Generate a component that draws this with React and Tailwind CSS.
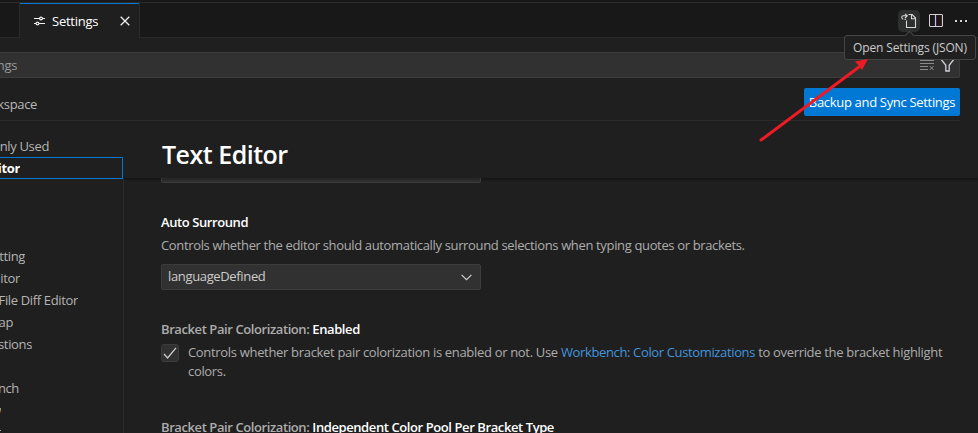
import React from "react";

const toc = [
  { text: "nly Used", box: "w-[49px]" },
  { text: "itor", box: "w-[20px]", active: true },
  { text: "", box: "w-0" },
  { text: "", box: "w-0" },
  { text: "", box: "w-0" },
  { text: "tting", box: "w-[25px]" },
  { text: "itor", box: "w-[20px]" },
  { text: "File Diff Editor", box: "w-[78px]" },
  { text: "ap", box: "w-[13px]" },
  { text: "stions", box: "w-[32px]" },
  { text: "", box: "w-0" },
  { text: "nch", box: "w-[19px]" },
  { text: "w", box: "w-[1px]" },
  { text: "r", box: "w-[1px]" },
];

function TabBar() {
  return (
    <div className="flex h-[35px] shrink-0">
      <div className="w-[20px] border-r border-b border-[#2b2b2b] bg-[#181818]" />
      <div className="flex w-[119px] items-center border-t border-[#0078d4] pl-[14px] text-white">
        <svg width="11" height="11" viewBox="0 0 11 11" fill="none" stroke="#f0f0f0" strokeWidth="1.2">
          <path d="M0 2.500h5.500M8.500 2.500H11M0 7.500h2M5 7.500h6" />
          <circle cx="7" cy="2.500" r="1.400" />
          <circle cx="3.500" cy="7.500" r="1.400" />
        </svg>
        <span className="ml-[7px] w-[58px] whitespace-nowrap tracking-[-0.25px]">Settings</span>
        <svg className="ml-[10px]" width="10" height="10" viewBox="0 0 10 10" stroke="#f0f0f0" strokeWidth="1.3">
          <path d="M.7.7l8.6 8.6M9.3.7L.7 9.3" />
        </svg>
      </div>
      <div className="flex flex-1 items-center justify-end border-b border-l border-[#2b2b2b] bg-[#181818] pr-[9px] pt-[1px]">
        <div className="flex h-[22px] w-[22px] items-center justify-center rounded-[5px] bg-[#2d2f2f]">
          <svg width="16" height="16" viewBox="0 0 16 16" fill="none" stroke="#d8d8d8" strokeWidth="1.1">
            <path d="M5.500 7.500v7h9V5l-3.300-3.500H7.500M10.500 1.800v4h4" />
            <path d="M2.300 6.300C.2 5.700.2 2.800 2.500 2.800H6M4 .8l2.200 2L4 5M3.600 6.400h1.200" />
          </svg>
        </div>
        <svg className="ml-[9px]" width="14" height="14" viewBox="0 0 14 14" fill="none" stroke="#d2d2d2" strokeWidth="1">
          <rect x=".5" y=".5" width="13" height="12" rx=".5" />
          <path d="M6.500 1v11" stroke="#c9c0d6" />
          <path d="M7.500 1v11M12.500 1v11" stroke="#4a2024" />
          <path d="M5.500 1v11" stroke="#20204c" />
        </svg>
        <svg className="ml-[11px] mr-[1px]" width="14" height="4" viewBox="0 0 14 4" fill="#d4d4d4">
          <rect x="1" y="1" width="2" height="2" />
          <rect x="6" y="1" width="2" height="2" />
          <rect x="11" y="1" width="2" height="2" />
        </svg>
      </div>
    </div>
  );
}

function Header() {
  return (
    <div className="mr-[18px] flex h-[83px] shrink-0 flex-col border-b border-[#2b2b2b]">
      <div className="mt-[14px] flex h-[26px] shrink-0 items-center rounded-r-[2px] border border-l-0 border-[#3c3c3c] bg-[#313131]">
        <span className="flex w-[17px] justify-end overflow-hidden text-[#989898]">ngs</span>
        <svg className="ml-auto" width="15" height="12" viewBox="0 0 15 12" fill="none" stroke="#8b8b8b" strokeWidth="1">
          <path d="M0 1.500h14M0 4.500h14M0 7.500h8M0 10.500h8M9.800 7l3.800 4M13.600 7l-3.800 4" />
        </svg>
        <svg className="ml-[5px] mr-[4px]" width="15" height="14" viewBox="0 0 15 14" fill="none" stroke="#d0d0d6" strokeWidth="1.3">
          <path d="M1 1.200h13L9.200 7.300V13H5.800V7.300z" />
        </svg>
      </div>
      <div className="mt-[10px] flex h-[28px] items-center justify-between">
        <span className="flex w-[37px] justify-end overflow-hidden pt-[3px] text-[#b8b8b8]">kspace</span>
        <button className="h-[28px] w-[156px] whitespace-nowrap rounded-[2px] bg-[#0078d4] text-center text-white tracking-[-0.32px]">
          Backup and Sync Settings
        </button>
      </div>
    </div>
  );
}

function Toc() {
  return (
    <nav className="w-[123px] shrink-0 overflow-hidden pt-[14px]">
      {toc.map((row, i) => (
        <div
          key={i}
          className={
            row.active
              ? "flex h-[22px] items-center border border-l-0 border-[#0078d4] font-bold text-white"
              : "flex h-[22px] items-center text-[#b4b4b4]"
          }
        >
          <span className={"flex justify-end overflow-hidden whitespace-nowrap " + row.box}>{row.text}</span>
        </div>
      ))}
    </nav>
  );
}

function Title({ prefix, name }) {
  return (
    <div className="h-[18px] whitespace-nowrap leading-[18px] font-semibold text-white tracking-[-0.41px]">
      {prefix && <span className="text-[#adadad]">{prefix} </span>}
      {name}
    </div>
  );
}

function Content() {
  return (
    <main className="min-w-0 flex-1">
      <h1 className="h-[57px] pl-[39px] pt-[14px] text-[25px] leading-[38px] font-semibold text-white tracking-[-0.5px]">
        Text Editor
      </h1>
      <div className="h-[255px] overflow-hidden border-l border-[#2b2b2b] pl-[37px]">
        <div className="-ml-[37px] h-[4px] bg-linear-to-b from-[#141414] to-[#1f1f1f] pl-[37px]">
          <div className="h-[5px] w-[320px] rounded-b-[2px] border border-t-0 border-[#3c3c3c] bg-linear-to-b from-[#252525] to-[#313131]" />
        </div>
        <div className="mt-[31px]">
          <Title name="Auto Surround" />
        </div>
        <p className="mt-[5px] h-[18px] whitespace-nowrap leading-[18px] text-[#adadad]">
          Controls whether the editor should automatically surround selections when typing quotes or brackets.
        </p>
        <div className="mt-[10px] flex h-[26px] w-[320px] items-center justify-between rounded-[2px] border border-[#3c3c3c] bg-[#313131] pl-[6px] pr-[8px] text-[#cccccc]">
          <span className="-mt-[2px]">languageDefined</span>
          <svg width="11" height="7" viewBox="0 0 11 7" fill="none" stroke="#d0d0d0" strokeWidth="1.2">
            <path d="M.6.8l4.900 4.900L10.400.8" />
          </svg>
        </div>
        <div className="mt-[30px]">
          <Title prefix="Bracket Pair Colorization:" name="Enabled" />
        </div>
        <div className="mt-[6px] flex">
          <div className="flex h-[18px] w-[18px] shrink-0 items-center justify-center rounded-[3px] border border-[#3c3c3c] bg-[#313131]">
            <svg width="14" height="12" viewBox="0 0 14 12" fill="none" stroke="#cccccc" strokeWidth="1.3">
              <path d="M1 7l3.600 4L13 .8" />
            </svg>
          </div>
          <p className="-mt-px ml-[9px] whitespace-nowrap leading-[19px] text-[#adadad] tracking-[-0.32px]">
            Controls whether bracket pair colorization is enabled or not. Use{" "}
            <span className="text-[#4295dd] tracking-[-0.36px]">Workbench: Color Customizations</span> to override the bracket highlight
            <br />
            colors.
          </p>
        </div>
        <div className="mt-[37px]">
          <Title prefix="Bracket Pair Colorization:" name="Independent Color Pool Per Bracket Type" />
        </div>
      </div>
    </main>
  );
}

export default function App() {
  return (
    <div className="relative flex h-[433px] w-[978px] flex-col overflow-hidden bg-[#1f1f1f] font-['Open_Sans','Noto_Sans',sans-serif] text-[13px] leading-[18px] tracking-[-0.35px]">
      <div className="h-[3px] shrink-0 border-b border-[#2b2b2b] bg-[#181818]" />
      <TabBar />
      <Header />
      <div className="flex min-h-0 flex-1">
        <Toc />
        <Content />
      </div>
      <div className="absolute left-[844px] top-[35px] flex h-[25px] w-[132px] items-center justify-center whitespace-nowrap rounded-[3px] border border-[#454545] bg-[#202020] pt-[1px] text-[12px] text-[#cccccc] tracking-[-0.15px]">
        Open Settings (JSON)
        <div className="absolute left-[61px] top-[-4px] h-[7px] w-[7px] rotate-45 border-l border-t border-[#454545] bg-[#202020]" />
      </div>
      <svg className="absolute left-[755px] top-[55px]" width="120" height="90" viewBox="0 0 120 90">
        <path d="M6 85L104 12" stroke="#ed1c24" strokeWidth="3" strokeLinecap="round" />
        <path d="M113 4L107 15L104.500 11.500L100 6.500z" fill="#ed1c24" />
      </svg>
    </div>
  );
}
